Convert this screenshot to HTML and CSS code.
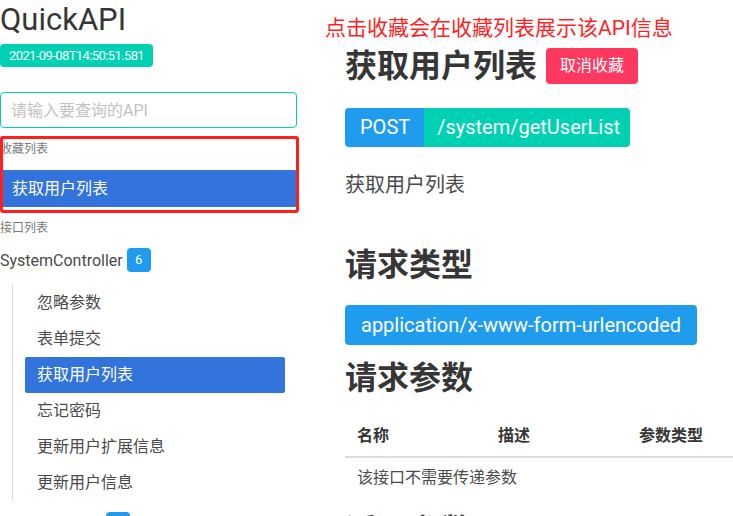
FILE: index.html
```html
<!DOCTYPE html>
<html lang="zh-CN">
<head>
<meta charset="utf-8">
<title>QuickAPI</title>
<link rel="stylesheet" href="styles.css">
</head>
<body>
<div class="page">
  <aside class="sidebar">
    <h1 class="brand">QuickAPI</h1>
    <span class="badge-time">2021-09-08T14:50:51.581</span>
    <input class="search" type="text" placeholder="请输入要查询的API">
    <div class="fav">
      <p class="menu-label">收藏列表</p>
      <a class="fav-item">获取用户列表</a>
      <div class="annot-box"></div>
    </div>
    <p class="menu-label api-label">接口列表</p>
    <div class="controller"><span>SystemController</span><span class="count">6</span></div>
    <ul class="menu-list">
      <li>忽略参数</li>
      <li>表单提交</li>
      <li class="active">获取用户列表</li>
      <li>忘记密码</li>
      <li>更新用户扩展信息</li>
      <li>更新用户信息</li>
    </ul>
    <div class="controller next"><span>UserController</span><span class="count">3</span></div>
  </aside>
  <main class="main">
    <p class="annot-text">点击收藏会在收藏列表展示该API信息</p>
    <div class="head-row">
      <h2 class="title">获取用户列表</h2>
      <button class="btn-unfav">取消收藏</button>
    </div>
    <div class="tags">
      <span class="tag tag-method">POST</span>
      <span class="tag tag-path">/system/getUserList</span>
    </div>
    <p class="desc">获取用户列表</p>
    <h2 class="title sec-type">请求类型</h2>
    <div class="tags type-row"><span class="tag tag-type">application/x-www-form-urlencoded</span></div>
    <h2 class="title sec-params">请求参数</h2>
    <table class="params">
      <thead>
        <tr><th class="c1">名称</th><th class="c2">描述</th><th>参数类型</th></tr>
      </thead>
      <tbody>
        <tr><td colspan="3">该接口不需要传递参数</td></tr>
      </tbody>
    </table>
    <h2 class="title sec-return">返回参数</h2>
  </main>
</div>
</body>
</html>
```

FILE: styles.css
```css
* { box-sizing: border-box; }
html, body { margin: 0; padding: 0; overflow: hidden; height: 100%; }
body {
  font-family: "Roboto", "Noto Sans CJK SC", sans-serif;
  color: #4a4a4a;
  font-size: 16px;
  background: #fff;
}
.page { display: flex; width: 733px; height: 516px; overflow: hidden; }
.sidebar {
  width: 298px;
  flex: 0 0 298px;
  display: flex;
  flex-direction: column;
  align-items: flex-start;
}
.sidebar > * { flex-shrink: 0; }
.brand {
  margin: 0;
  font-size: 31px;
  line-height: 40px;
  font-weight: 400;
  color: #363636;
}
.badge-time {
  margin-top: 4px;
  height: 23px;
  line-height: 23px;
  padding: 0 9px;
  font-size: 13px;
  letter-spacing: -0.6px;
  color: #fff;
  background: #00d1b2;
  border-radius: 4px;
}
.search {
  margin-top: 25px;
  width: 297px;
  height: 36px;
  border: 1px solid #00d1b2;
  border-radius: 4px;
  padding: 0 10px;
  font-family: inherit;
  font-size: 16px;
  color: #363636;
  outline: none;
}
.search::placeholder { color: #c2c2c2; }
.fav {
  position: relative;
  margin-top: 8px;
  width: 299px;
  height: 77px;
  padding-top: 4px;
}
.menu-label {
  margin: 0;
  font-size: 12px;
  line-height: 18px;
  color: #7a7a7a;
}
.fav-item {
  display: block;
  margin-top: 12px;
  width: 297px;
  height: 37px;
  line-height: 37px;
  padding-left: 12px;
  background: #3273dc;
  color: #fff;
  border-radius: 2px;
}
.annot-box {
  position: absolute;
  inset: 0;
  border: 3px solid #ff1f1f;
  border-radius: 3px;
}
.api-label { margin-top: 6px; }
.controller {
  margin-top: 11px;
  display: flex;
  align-items: center;
  gap: 4px;
  height: 24px;
  color: #4a4a4a;
}
.count {
  display: inline-block;
  width: 24px;
  height: 24px;
  line-height: 24px;
  text-align: center;
  font-size: 13px;
  color: #fff;
  background: #209cee;
  border-radius: 4px;
}
.menu-list {
  list-style: none;
  margin: 12px 0 0 12px;
  padding: 1px 0 0 12px;
  border-left: 1px solid #dbdbdb;
}
.menu-list li {
  width: 260px;
  height: 36px;
  line-height: 36px;
  padding-left: 12px;
  border-radius: 2px;
  color: #4a4a4a;
}
.menu-list li.active { background: #3273dc; color: #fff; }
.controller.next { margin-top: 11px; }

.main {
  position: relative;
  flex: 1;
  padding-left: 47px;
  overflow: hidden;
}
.annot-text {
  position: absolute;
  left: 27px;
  top: 13px;
  margin: 0;
  font-size: 21px;
  line-height: 30px;
  color: #ff1f1f;
  white-space: nowrap;
}
.head-row {
  margin-top: 48px;
  display: flex;
  align-items: center;
  gap: 9px;
  height: 36px;
}
.title {
  margin: 0;
  font-size: 32px;
  line-height: 40px;
  font-weight: 700;
  color: #363636;
}
.head-row .title { line-height: 36px; }
.btn-unfav {
  height: 36px;
  padding: 0 14px;
  border: none;
  border-radius: 4px;
  background: #ff3860;
  color: #fff;
  font-family: inherit;
  font-size: 16px;
  line-height: 36px;
}
.tags { display: flex; margin-top: 24px; }
.tag {
  height: 39px;
  line-height: 39px;
  font-size: 20px;
  color: #fff;
  padding: 0 16px;
}
.tag-method { background: #209cee; border-radius: 4px 0 0 4px; padding: 0 14px 0 15px; }
.tag-path { background: #00d1b2; border-radius: 0 4px 4px 0; padding: 0 10px 0 13px; }
.desc {
  margin: 24px 0 0;
  font-size: 20px;
  line-height: 28px;
  color: #4a4a4a;
}
.sec-type { margin-top: 46px; }
.type-row { margin-top: 20px; }
.tag-type { background: #209cee; border-radius: 4px; height: 40px; line-height: 40px; }
.sec-params { margin-top: 13px; }
.params {
  margin-top: 18px;
  width: 100%;
  border-collapse: collapse;
}
.params th, .params td {
  padding: 8px 12px;
  line-height: 24px;
  text-align: left;
}
.params th {
  font-weight: 700;
  color: #363636;
  border-bottom: 2px solid #dbdbdb;
}
.params .c1, .params .c2 { width: 141px; }
.params td { color: #4a4a4a; }
.sec-return { margin-top: 13px; }
```
